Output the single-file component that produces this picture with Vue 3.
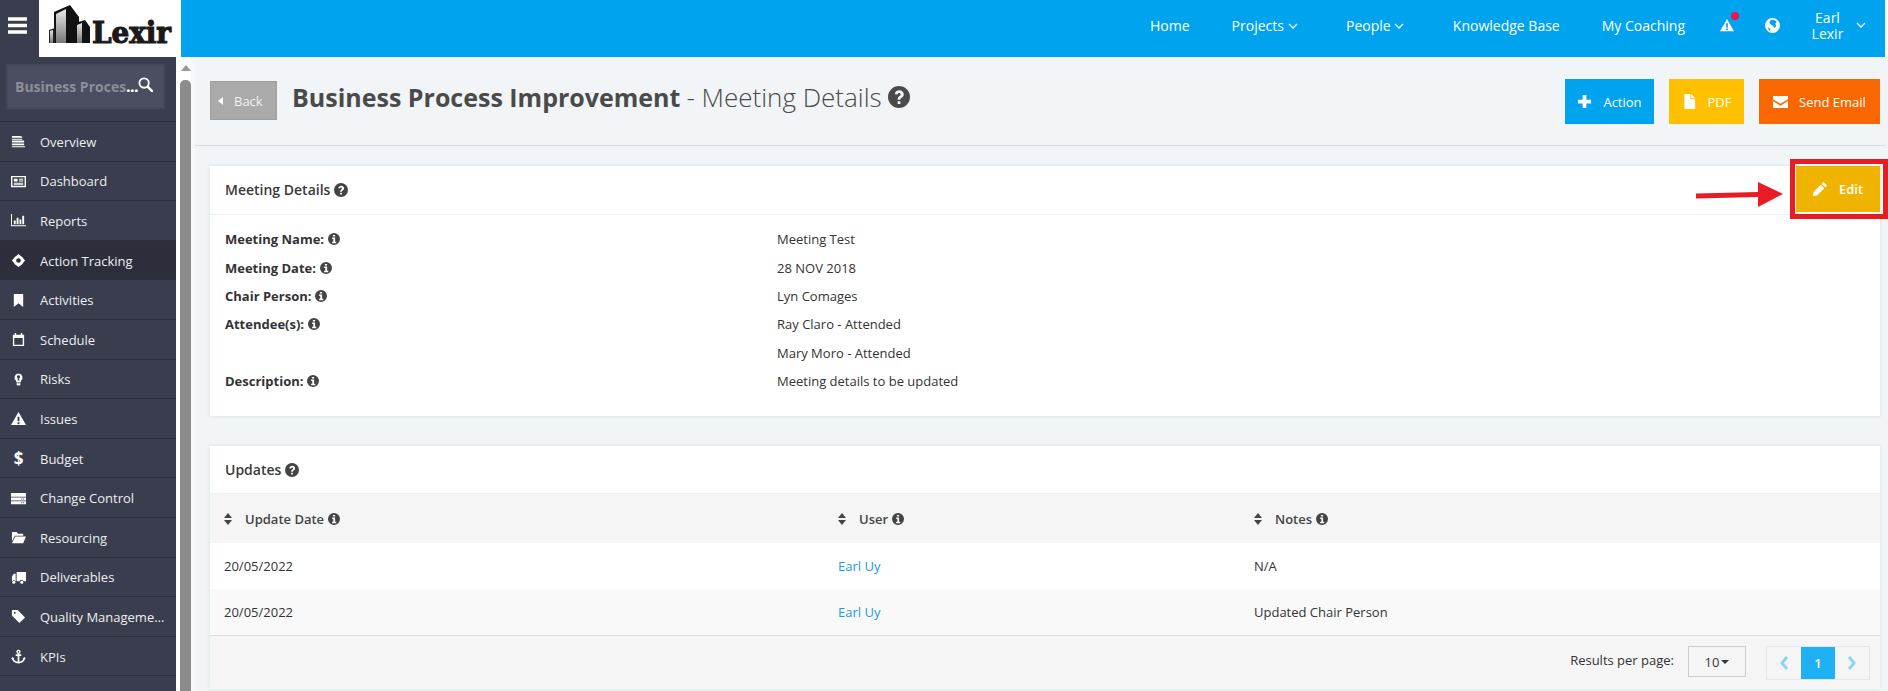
<template>
  <div class="page">
    <header class="topbar">
      <div class="menu-btn"><svg class="icon" viewBox="0 0 16 16" v-html="icons.menu"></svg></div>
      <div class="logo">
        <svg width="142" height="57" viewBox="0 0 142 57">
          <defs>
            <linearGradient id="face" x1="0" y1="0" x2="0" y2="1">
              <stop offset="0" stop-color="#e8e8e8" />
              <stop offset="1" stop-color="#777" />
            </linearGradient>
          </defs>
          <path fill="#111" d="M15 12 31 5l9 12v26H15z" />
          <path fill="url(#face)" d="M17 14l10-5v34H17z" />
          <path fill="#222" d="M10 30l6-2v15h-6z" />
          <path fill="url(#face)" d="M11 31l3-1v13h-3z" />
          <path fill="#111" d="M36 23l10-3 5 7v16H36z" />
          <path fill="url(#face)" d="M38 25l5-2v20h-5z" />
          <text x="53" y="43" class="logo-text" textLength="79" lengthAdjust="spacingAndGlyphs">Lexir</text>
        </svg>
      </div>
      <nav class="topnav">
        <a class="nav-link">Home</a>
        <a class="nav-link with-caret">Projects <svg class="caret" viewBox="0 0 10 6"><path d="M1 1l4 4 4-4" /></svg></a>
        <a class="nav-link with-caret">People <svg class="caret" viewBox="0 0 10 6"><path d="M1 1l4 4 4-4" /></svg></a>
        <a class="nav-link">Knowledge Base</a>
        <a class="nav-link">My Coaching</a>
        <span class="alert">
          <svg class="icon" viewBox="0 0 16 16" v-html="icons.warning"></svg>
          <i class="alert-dot"></i>
        </span>
        <svg class="icon globe" viewBox="0 0 16 16" v-html="icons.globe"></svg>
        <div class="user">Earl<br />Lexir</div>
        <svg class="caret user-caret" viewBox="0 0 10 6"><path d="M1 1l4 4 4-4" /></svg>
      </nav>
    </header>

    <div class="body">
      <aside class="sidebar">
        <div class="search-wrap">
          <div class="search">
            <span class="search-text">Business Proces<b>...</b></span>
            <svg class="icon search-icon" viewBox="0 0 16 16" v-html="icons.search"></svg>
          </div>
        </div>
        <ul class="side-menu">
          <li v-for="item in menu" :key="item.label" class="side-item" :class="{ active: item.active }">
            <span v-if="item.icon === 'dollar'" class="side-icon dollar">$</span>
            <svg v-else class="icon side-icon" viewBox="0 0 16 16" v-html="icons[item.icon]"></svg>
            <span class="side-label">{{ item.label }}</span>
          </li>
        </ul>
      </aside>

      <div class="scroller">
        <span class="scroll-up"></span>
        <span class="scroll-thumb"></span>
      </div>

      <main class="main">
        <div class="page-head">
          <a class="back-btn"><span class="back-arrow"></span>Back</a>
          <h1 class="title">
            <strong>Business Process Improvement</strong> - Meeting Details
            <svg class="icon title-help" viewBox="0 0 16 16" v-html="icons.question"></svg>
          </h1>
          <div class="head-actions">
            <a class="btn btn-action"><svg class="icon" viewBox="0 0 16 16" v-html="icons.plus"></svg>Action</a>
            <a class="btn btn-pdf"><svg class="icon" viewBox="0 0 16 16" v-html="icons.file"></svg>PDF</a>
            <a class="btn btn-email"><svg class="icon" viewBox="0 0 16 16" v-html="icons.envelope"></svg>Send Email</a>
          </div>
        </div>

        <div class="content">
          <section class="card">
            <div class="card-head">
              <h2>Meeting Details <svg class="icon help" viewBox="0 0 16 16" v-html="icons.question"></svg></h2>
              <a class="edit-btn"><svg class="icon" viewBox="0 0 16 16" v-html="icons.pencil"></svg>Edit</a>
            </div>
            <div class="details">
              <template v-for="row in details" :key="row.value">
                <div class="detail-label">
                  <template v-if="row.label">
                    {{ row.label }} <svg class="icon info" viewBox="0 0 16 16" v-html="icons.info"></svg>
                  </template>
                </div>
                <div class="detail-value">{{ row.value }}</div>
              </template>
            </div>
          </section>

          <section class="card updates">
            <div class="card-head updates-head">
              <h2>Updates <svg class="icon help" viewBox="0 0 16 16" v-html="icons.question"></svg></h2>
            </div>
            <div class="row thead">
              <div v-for="col in columns" :key="col" class="th">
                <svg class="sort" viewBox="0 0 8 12"><path d="M4 0l4 5H0zM4 12l4-5H0z" /></svg>
                <span>{{ col }}</span>
                <svg class="icon info" viewBox="0 0 16 16" v-html="icons.info"></svg>
              </div>
            </div>
            <div v-for="(row, i) in updates" :key="i" class="row tr" :class="{ odd: i % 2 === 1 }">
              <div>{{ row.date }}</div>
              <div><a class="link">{{ row.user }}</a></div>
              <div>{{ row.notes }}</div>
            </div>
            <div class="table-foot">
              <span class="per-page">Results per page:</span>
              <div class="select">10<span class="select-caret"></span></div>
              <div class="pager">
                <span class="pager-btn"><svg class="pager-chev" viewBox="0 0 10 16"><path d="M8 2L3 8l5 6" /></svg></span>
                <span class="pager-btn current">1</span>
                <span class="pager-btn"><svg class="pager-chev" viewBox="0 0 10 16"><path d="M2 2l5 6-5 6" /></svg></span>
              </div>
            </div>
          </section>
        </div>
      </main>
    </div>

    <!-- red annotation drawn on top of the screenshot -->
    <div class="note-box"></div>
    <svg class="note-arrow" width="90" height="26" viewBox="0 0 90 26">
      <path fill="#e81c24" d="M0 11.500 62 10V0l25 12-25 13V15L0 16.500z" />
    </svg>
  </div>
</template>

<script setup>
const icons = {
  menu: '<path d="M0 1h16v3H0zM0 6.500h16v3H0zM0 12h16v3H0z"/>',
  search:
    '<circle cx="6.500" cy="6.500" r="5" fill="none" stroke="currentColor" stroke-width="2"/><path d="M10.500 10.500L15 15" stroke="currentColor" stroke-width="2.500" stroke-linecap="round"/>',
  overview: '<path d="M1 2h9l2 1v1H1zM1 5h11v1H1zM1 7h13v2H1zM1 10h13v2H1zM1 13h14v1H1z"/>',
  dashboard:
    '<path fill-rule="evenodd" d="M0 2h16v12H0zM1.500 3.500v9h13v-9z"/><path d="M3 5h4v3H3zM8.500 5H13v1H8.500zM8.500 7H13v1H8.500zM3 9.300h10v1H3zM3 11h10v.8H3z"/>',
  reports: '<path d="M0 1h1v12h15v1.200H0zM3 8h2v4H3zM6 5h2v7H6zM9 7h2v5H9zM12 3h2v9h-2z"/>',
  target:
    '<path fill-rule="evenodd" d="M8 1l2.200 1.800a6 6 0 0 1 3 3L15 8l-1.800 2.200a6 6 0 0 1-3 3L8 15l-2.200-1.800a6 6 0 0 1-3-3L1 8l1.800-2.200a6 6 0 0 1 3-3zM8 5.500a2.500 2.500 0 1 0 0 5 2.500 2.500 0 0 0 0-5z"/>',
  bookmark: '<path d="M3 1h10v14l-5-4-5 4z"/>',
  calendar: '<path fill-rule="evenodd" d="M4 1h1.500v2h5V1H12v2h2v12H2V3h2zM3.500 6.500v7h9v-7z"/>',
  bulb:
    '<path fill-rule="evenodd" d="M8 1.500a4.300 4.300 0 0 1 2.600 7.700l-.4 2H5.800l-.4-2A4.300 4.300 0 0 1 8 1.500zM8 3.500a1.700 1.700 0 0 0-.8 3.200V9h1.600V6.700A1.700 1.700 0 0 0 8 3.500z"/><path d="M6 12h4v1.200l-1 1.300H7l-1-1.300z"/>',
  warning: '<path fill-rule="evenodd" d="M8 1l8 14H0zM7 6v5h2V6zM7 12v2h2v-2z"/>',
  server:
    '<path fill-rule="evenodd" d="M0 2h16v4H0zM0 7h16v3H0zM0 11h16v3H0zM11 8v1h1V8zM13 8v1h1V8zM11 12v1h1v-1zM13 12v1h1v-1z"/>',
  folder: '<path d="M1 2h5l1.500 2H13v2H4L1 12zM4.500 7H16l-3 7H1z"/>',
  truck:
    '<path d="M6 2h10v10h-2.500a2.500 2.500 0 0 0-4.500 0H6zM1 7l2-3h2v8H4.800a2.500 2.500 0 0 0-3.800 0z"/><circle cx="3" cy="13" r="1.600"/><circle cx="11.500" cy="13" r="1.600"/>',
  tag: '<path fill-rule="evenodd" d="M1 1h6l8 8-6 6-8-8zM4 3a1 1 0 1 0 0 2 1 1 0 0 0 0-2z"/>',
  anchor:
    '<circle cx="8" cy="3" r="1.600" fill="none" stroke="currentColor" stroke-width="1.400"/><path d="M5 6.500h6M8 5v9.500" stroke="currentColor" stroke-width="1.800" fill="none"/><path d="M1.800 9.500c0 3 3.200 5 6.200 5s6.200-2 6.200-5" fill="none" stroke="currentColor" stroke-width="1.800"/><path d="M0 10.500l1.800-2 1.800 2zM12.400 10.500l1.800-2 1.800 2z"/>',
  globe:
    '<path fill-rule="evenodd" d="M8 0a8 8 0 1 0 0 16A8 8 0 0 0 8 0zM6 2.500c2-1 5-.5 6.500 1.500L11 6l1 2.500-2 2.500-1.500-3L6 7 4.500 5zM3 10l2 1 1 2-1.500 .5z"/>',
  plus: '<path d="M6 1h4v5h5v4h-5v5H6v-5H1V6h5z"/>',
  file: '<path d="M2.500 0H9v5.500h5V16H2.500zM10 0l4 4.500h-4z"/>',
  envelope: '<path d="M0 2h16v3.500L8 10.500 0 5.500zM0 7.500l8 5 8-5V15H0z"/>',
  pencil: '<path d="M11.500 1l3.500 3.500-1.800 1.800-3.500-3.500zM8.800 3.700l3.500 3.500L5 14.500 1 15l.5-4z"/>',
  question:
    '<path fill-rule="evenodd" d="M8 0a8 8 0 1 0 0 16A8 8 0 0 0 8 0zM5 6C5 4 6.500 3 8.200 3 10 3 11.500 4.200 11.500 6c0 1.400-.8 2-1.600 2.600-.6.400-.9.700-.9 1.400H7c0-1.400.5-2.100 1.300-2.700.6-.4.9-.7.9-1.200 0-.6-.5-1-1.100-1-.7 0-1.100.5-1.200 1.100zM7 11h2v2H7z"/>',
  info:
    '<path fill-rule="evenodd" d="M8 0a8 8 0 1 0 0 16A8 8 0 0 0 8 0zM6.500 2.500h3v2.200h-3zM5.500 6h4v5.500H11V13.500H5.500v-2H7V8H5.500z"/>',
};

const menu = [
  { label: "Overview", icon: "overview" },
  { label: "Dashboard", icon: "dashboard" },
  { label: "Reports", icon: "reports" },
  { label: "Action Tracking", icon: "target", active: true },
  { label: "Activities", icon: "bookmark" },
  { label: "Schedule", icon: "calendar" },
  { label: "Risks", icon: "bulb" },
  { label: "Issues", icon: "warning" },
  { label: "Budget", icon: "dollar" },
  { label: "Change Control", icon: "server" },
  { label: "Resourcing", icon: "folder" },
  { label: "Deliverables", icon: "truck" },
  { label: "Quality Management", icon: "tag" },
  { label: "KPIs", icon: "anchor" },
];

const details = [
  { label: "Meeting Name:", value: "Meeting Test" },
  { label: "Meeting Date:", value: "28 NOV 2018" },
  { label: "Chair Person:", value: "Lyn Comages" },
  { label: "Attendee(s):", value: "Ray Claro - Attended" },
  { label: "", value: "Mary Moro - Attended" },
  { label: "Description:", value: "Meeting details to be updated" },
];

const columns = ["Update Date", "User", "Notes"];

const updates = [
  { date: "20/05/2022", user: "Earl Uy", notes: "N/A" },
  { date: "20/05/2022", user: "Earl Uy", notes: "Updated Chair Person" },
];
</script>

<style>
html,
body {
  overflow: hidden;
  background: #fff;
}
</style>

<style scoped>
.page {
  position: relative;
  height: 691px;
  overflow: hidden;
  font-family: "Open Sans", sans-serif;
  font-size: 13px;
  color: #333;
}
.icon {
  width: 14px;
  height: 14px;
  fill: currentColor;
  flex: none;
}

/* top bar */
.topbar {
  display: flex;
  height: 57px;
  padding-right: 3px;
}
.menu-btn {
  width: 39px;
  background: #3a3d4d;
  color: #fff;
  display: flex;
  align-items: center;
  padding-left: 8px;
  padding-bottom: 7px;
  box-sizing: border-box;
}
.menu-btn .icon {
  width: 19px;
  height: 19px;
}
.logo {
  width: 142px;
  background: #fff;
}
.logo-text {
  font-family: "DejaVu Serif", serif;
  font-weight: 700;
  font-size: 30px;
  fill: #1a1a1a;
  stroke: #1a1a1a;
  stroke-width: 1.2;
}
.topnav {
  flex: 1;
  background: #00a3ee;
  color: #fff;
  display: flex;
  align-items: center;
  justify-content: flex-end;
  padding-right: 19px;
  padding-bottom: 7px;
  font-size: 14px;
  font-weight: 500;
}
.nav-link {
  margin-left: 42px;
  white-space: nowrap;
}
.with-caret {
  margin-right: 6.500px;
}
.caret {
  width: 10px;
  height: 6px;
  fill: none;
  stroke: currentColor;
  stroke-width: 1.300;
  vertical-align: 2px;
}
.alert {
  position: relative;
  margin-left: 35px;
  display: flex;
}
.alert-dot {
  position: absolute;
  top: -6px;
  right: -5px;
  width: 8px;
  height: 8px;
  border-radius: 50%;
  background: #f0134d;
}
.globe {
  margin-left: 31px;
  width: 15px;
  height: 15px;
}
.user {
  margin-left: 31px;
  line-height: 16px;
  text-align: center;
  width: 33px;
  font-weight: 400;
  margin-top: 2px;
}
.user-caret {
  margin-left: 12px;
}

/* sidebar */
.body {
  display: flex;
  height: 634px;
}
.sidebar {
  width: 176px;
  flex: none;
  background: #3a3d4d;
  color: #eceef3;
}
.search-wrap {
  height: 65px;
  box-sizing: border-box;
  padding: 7px 11px 0 6px;
  border-bottom: 1px solid #2e303e;
}
.search {
  height: 45px;
  box-sizing: border-box;
  background: #4b4e60;
  border: 2px solid #444757;
  display: flex;
  align-items: center;
  padding-left: 7px;
  color: #fff;
}
.search-text {
  font-size: 14px;
  font-weight: 700;
  color: #8e8f9b;
  width: 123px;
  white-space: nowrap;
}
.search-text b {
  color: #fff;
}
.search-icon {
  width: 15px;
  height: 15px;
  margin-bottom: 4px;
}
.side-menu {
  list-style: none;
  margin: 0;
  padding: 0;
}
.side-item {
  display: flex;
  align-items: center;
  height: 39.600px;
  box-sizing: border-box;
  border-bottom: 1px solid #2e303e;
  padding: 1px 0 0 11px;
}
.side-item.active {
  background: #2c2e3c;
}
.side-icon {
  width: 15px;
  height: 15px;
  color: #fff;
  text-align: center;
  font-weight: 700;
  font-size: 17px;
  line-height: 15px;
}
.side-label {
  margin-left: 14px;
  width: 125.500px;
  white-space: nowrap;
  overflow: hidden;
  text-overflow: ellipsis;
}

/* fake scrollbar */
.scroller {
  width: 15px;
  margin-left: 4px;
  flex: none;
  border-right: 4px solid #f5f8fb;
  box-sizing: border-box;
  display: flex;
  flex-direction: column;
  align-items: center;
  padding-top: 8px;
}
.scroll-up {
  border: 5px solid transparent;
  border-top: 0;
  border-bottom: 6px solid #999;
}
.scroll-thumb {
  flex: 1;
  width: 11px;
  margin-top: 9px;
  background: #8c8c8c;
  border-radius: 5px 5px 0 0;
}

/* main column */
.main {
  flex: 1;
  min-width: 0;
  background: #f1f5f8;
}
.page-head {
  height: 89px;
  box-sizing: border-box;
  border-bottom: 1px solid #d6dce3;
  padding: 22px 7px 0 15px;
  margin-right: 3px;
  display: flex;
  align-items: flex-start;
}
.back-btn {
  width: 67px;
  height: 39px;
  box-sizing: border-box;
  margin-top: 2px;
  background: #aaa;
  border: 1px solid #9e9e9e;
  color: #f2f2f2;
  display: flex;
  align-items: center;
  padding-left: 7px;
}
.back-arrow {
  border: 4px solid transparent;
  border-left: 0;
  border-right: 5px solid #fff;
  margin-right: 11px;
}
.title {
  margin: 1px 0 0 15px;
  font-size: 26px;
  font-weight: 300;
  line-height: 34px;
  color: #4a4a4a;
  white-space: nowrap;
  display: flex;
  align-items: center;
  gap: 6px;
}
.title strong {
  font-size: 25px;
  font-weight: 700;
}
.title-help {
  width: 22px;
  height: 22px;
}
.head-actions {
  margin-left: auto;
  margin-right: -2px;
  display: flex;
  gap: 15px;
}
.btn {
  height: 45px;
  display: flex;
  align-items: center;
  justify-content: center;
  gap: 11px;
  color: #fff;
  font-weight: 500;
  font-size: 13px;
}
.btn .icon {
  width: 15px;
  height: 15px;
}
.btn-action {
  width: 89px;
  background: #00a3ee;
}
.btn-pdf {
  width: 75px;
  background: #ffc000;
}
.btn-email {
  width: 121px;
  background: #f96800;
}
.content {
  padding: 20px 8px 0 15px;
}
.card {
  background: #fff;
  box-shadow: 0 0 4px rgba(60, 70, 90, 0.12);
}
.card-head {
  height: 49px;
  box-sizing: border-box;
  border-bottom: 1px solid #eceff2;
  display: flex;
  align-items: flex-start;
  justify-content: space-between;
  padding-left: 15px;
}
.card-head h2 {
  margin: 0;
  font-size: 14px;
  font-weight: 600;
  line-height: 47px;
  color: #3a3a3a;
  display: flex;
  align-items: center;
  gap: 4px;
}
.help {
  color: #444;
}
.edit-btn {
  width: 84px;
  height: 46px;
  background: #f0b400;
  color: #fff;
  font-weight: 600;
  display: flex;
  align-items: center;
  gap: 11px;
  padding-left: 16px;
  box-sizing: border-box;
}
.edit-btn .icon {
  width: 16px;
  height: 16px;
}
.details {
  display: grid;
  grid-template-columns: 552px 1fr;
  grid-auto-rows: 28.400px;
  align-items: center;
  padding: 10px 15px 21px;
}
.detail-label {
  font-weight: 700;
  display: flex;
  align-items: center;
  gap: 4px;
}
.info {
  width: 12px;
  height: 12px;
  color: #444;
}

/* updates table */
.updates {
  margin-top: 30px;
}
.updates-head {
  height: 48px;
  padding-left: 15px;
}
.row {
  display: grid;
  grid-template-columns: 614px 416px 1fr;
  padding-left: 14px;
  align-items: center;
}
.thead {
  height: 49px;
  background: #f5f5f5;
}
.th {
  display: flex;
  align-items: center;
  font-weight: 600;
  color: #444;
}
.sort {
  width: 8px;
  height: 12px;
  fill: #444;
  margin-right: 13px;
}
.th .info {
  margin-left: 4px;
}
.tr {
  height: 46px;
  background: #fff;
}
.tr.odd {
  height: 47px;
  background: #f9f9f9;
  border-bottom: 1px solid #ddd;
  box-sizing: border-box;
}
.link {
  color: #1b9ce8;
}
.table-foot {
  height: 53px;
  background: #f5f5f5;
  display: flex;
  align-items: flex-start;
  justify-content: flex-end;
  padding-right: 10px;
  padding-top: 10px;
  box-sizing: border-box;
}
.per-page {
  line-height: 29px;
}
.select {
  width: 58px;
  height: 31px;
  box-sizing: border-box;
  margin-left: 14px;
  border: 1px solid #ccc;
  display: flex;
  align-items: center;
  justify-content: center;
  gap: 2px;
}
.select-caret {
  border: 4px solid transparent;
  border-bottom: 0;
  border-top: 4px solid #333;
}
.pager {
  margin-left: 20px;
  height: 34px;
  display: flex;
  border: 1px solid #e6e6e6;
  box-sizing: border-box;
}
.pager-btn {
  width: 34px;
  display: flex;
  align-items: center;
  justify-content: center;
  color: #fff;
  font-weight: 600;
}
.pager-btn.current {
  background: #1eb0f5;
}
.pager-chev {
  width: 10px;
  height: 16px;
  fill: none;
  stroke: #8ed4f8;
  stroke-width: 3;
}

/* annotation */
.note-box {
  position: absolute;
  left: 1790px;
  top: 159px;
  width: 98px;
  height: 60px;
  box-sizing: border-box;
  border: 5px solid #e81c24;
  box-shadow: inset 0 0 0 1px #fff;
}
.note-arrow {
  position: absolute;
  left: 1696px;
  top: 182px;
}
</style>
